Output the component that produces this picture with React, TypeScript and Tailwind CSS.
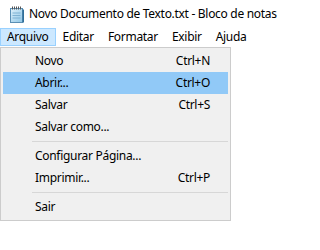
import React from "react";

type Entry = { label: string; shortcut?: string; active?: boolean } | "sep";

const menu = ["Arquivo", "Editar", "Formatar", "Exibir", "Ajuda"];

const entries: Entry[] = [
  { label: "Novo", shortcut: "Ctrl+N" },
  { label: "Abrir...", shortcut: "Ctrl+O", active: true },
  { label: "Salvar", shortcut: "Ctrl+S" },
  { label: "Salvar como..." },
  "sep",
  { label: "Configurar Página..." },
  { label: "Imprimir...", shortcut: "Ctrl+P" },
  "sep",
  { label: "Sair" },
];

function NotepadIcon() {
  return (
    <svg width="16" height="17" viewBox="0 0 16 17">
      <defs>
        <linearGradient id="pg" x1="0" y1="0" x2="1" y2="1">
          <stop offset="0" stopColor="#dff1fb" />
          <stop offset="1" stopColor="#8ec6e6" />
        </linearGradient>
      </defs>
      <rect x="1.5" y="2.5" width="12" height="14" fill="url(#pg)" stroke="#5a8fb5" />
      <rect x="13.5" y="3.5" width="1.5" height="13" fill="#2f6f99" />
      <line x1="3.5" y1="7" x2="11.5" y2="7" stroke="#7fb2d3" />
      <line x1="3.5" y1="9.5" x2="11.5" y2="9.5" stroke="#7fb2d3" />
      <line x1="3.5" y1="12" x2="11.5" y2="12" stroke="#7fb2d3" />
      {[3, 5, 7, 9, 11].map((x) => (
        <rect key={x} x={x} y="0.5" width="1" height="3" fill="#555" />
      ))}
    </svg>
  );
}

export default function App() {
  return (
    <div
      className="relative h-[250px] w-[320px] overflow-hidden bg-white text-[12px] tracking-[-0.3px] text-black"
      style={{ fontFamily: '"Noto Sans", "Open Sans", sans-serif' }}
    >
      <div className="flex h-[28px] items-center gap-[4px] pl-[9px]">
        <NotepadIcon />
        <span>Novo Documento de Texto.txt - Bloco de notas</span>
      </div>

      <div className="flex h-[18px] items-stretch">
        {menu.map((m, i) => (
          <div
            key={m}
            className={
              i === 0
                ? "flex items-center border border-[#99d1ff] bg-[#cce8ff] px-[6px]"
                : "flex items-center px-[7px]"
            }
          >
            {m}
          </div>
        ))}
      </div>

      <div className="absolute left-0 top-[47px] w-[231px] border border-[#cccccc] bg-[#f0f0f0] p-[2px]">
        {entries.map((e, i) =>
          e === "sep" ? (
            <div key={i} className="flex h-[7px] items-center pl-[29px]">
              <div className="h-px w-full bg-[#d7d7d7]" />
            </div>
          ) : (
            <div
              key={i}
              className={
                "flex h-[22px] items-center justify-between pl-[32px] pr-[18px]" +
                (e.active ? " bg-[#91c9f7]" : "")
              }
            >
              <span>{e.label}</span>
              {e.shortcut && <span>{e.shortcut}</span>}
            </div>
          )
        )}
      </div>
    </div>
  );
}
